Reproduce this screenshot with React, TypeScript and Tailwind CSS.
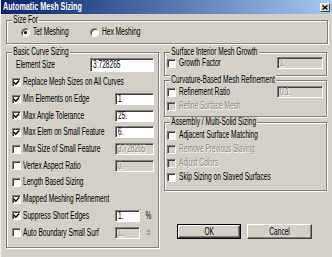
import React from "react";

// the reference is squeezed horizontally, so text is drawn narrow
function T({ children, center }: { children: React.ReactNode; center?: boolean }) {
  return (
    <span
      className={`inline-block whitespace-nowrap scale-x-[0.66] ${
        center ? "origin-center" : "origin-left"
      }`}
    >
      {children}
    </span>
  );
}

function Check({ checked, disabled }: { checked?: boolean; disabled?: boolean }) {
  return (
    <span
      className={`w-[9px] h-[9px] shrink-0 flex items-center justify-center border border-t-[#808080] border-l-[#808080] border-b-white border-r-white shadow-[inset_1px_1px_0_#404040] ${
        disabled ? "bg-[#d4d0c8]" : "bg-white"
      }`}
    >
      {checked && (
        <svg width="7" height="7" viewBox="0 0 7 7">
          <path d="M0.8 3.2 L2.8 5.2 L6.2 1.4" stroke="#000" strokeWidth="1.5" fill="none" />
        </svg>
      )}
    </span>
  );
}

function Radio({ checked }: { checked?: boolean }) {
  return (
    <span className="w-[9px] h-[9px] shrink-0 rounded-full bg-white border border-t-[#808080] border-l-[#808080] border-b-white border-r-white shadow-[inset_1px_1px_0_#404040] flex items-center justify-center">
      {checked && <span className="w-[3px] h-[3px] rounded-full bg-black" />}
    </span>
  );
}

function Field({
  value,
  disabled,
  className,
}: {
  value: string;
  disabled?: boolean;
  className: string;
}) {
  return (
    <span
      className={`flex items-center pl-[2px] border border-t-[#808080] border-l-[#808080] border-b-white border-r-white shadow-[inset_1px_1px_0_#404040] ${
        disabled ? "bg-[#d4d0c8] text-[#8a8880] [text-shadow:1px_1px_0_#fff]" : "bg-white text-black"
      } ${className}`}
    >
      <T>{value}</T>
    </span>
  );
}

function Label({ text, disabled }: { text: string; disabled?: boolean }) {
  return (
    <span
      className={`flex-1 min-w-0 ${
        disabled ? "text-[#8a8880] [text-shadow:1px_1px_0_#fff]" : "text-black"
      }`}
    >
      <T>{text}</T>
    </span>
  );
}

function Group({
  title,
  className,
  children,
}: {
  title: string;
  className: string;
  children?: React.ReactNode;
}) {
  return (
    <div
      className={`relative border border-[#808080] shadow-[inset_1px_1px_0_#fff,1px_1px_0_#fff] ${className}`}
    >
      <span className="absolute left-[5px] top-[-6px] px-[2px] bg-[#d4d0c8] leading-[10px] whitespace-nowrap origin-left scale-x-[0.66]">
        {title}
      </span>
      {children}
    </div>
  );
}

const leftRows = [
  { label: "Min Elements on Edge", checked: true, value: "1" },
  { label: "Max Angle Tolerance", checked: true, value: "25." },
  { label: "Max Elem on Small Feature", checked: true, value: "6." },
  { label: "Max Size of Small Feature", checked: false, value: "3.728265", disabled: true },
  { label: "Vertex Aspect Ratio", checked: false, value: "3.", disabled: true },
];

export default function App() {
  return (
    <div className="w-[332px] h-[257px] bg-[#d4d0c8] overflow-hidden text-[10px] leading-none text-black font-['Liberation_Sans',Arial,sans-serif] border-l border-l-[#f0eee8]">
      {/* title bar */}
      <div className="h-[14px] flex items-center justify-between pl-[2px] pr-[2px] bg-gradient-to-r from-[#0a246a] to-[#a6caf0]">
        <span className="text-white font-bold text-[10px] inline-block origin-left scale-x-[0.72] whitespace-nowrap">
          Automatic Mesh Sizing
        </span>
        <span className="w-[10px] h-[9px] bg-[#d4d0c8] border border-t-white border-l-white border-b-[#404040] border-r-[#404040] flex items-center justify-center">
          <svg width="6" height="5" viewBox="0 0 6 5">
            <path d="M0.5 0.5 L5.5 4.5 M5.5 0.5 L0.5 4.5" stroke="#000" strokeWidth="1.3" />
          </svg>
        </span>
      </div>

      <div className="px-[5px]">
        {/* Size For */}
        <Group title="Size For" className="mt-[6px] h-[24px] w-[322px]">
          <div className="flex items-center h-full pl-[14px]">
            <div className="flex items-center gap-[3px] w-[69px]">
              <Radio checked />
              <Label text="Tet Meshing" />
            </div>
            <div className="flex items-center gap-[3px] w-[80px]">
              <Radio />
              <Label text="Hex Meshing" />
            </div>
          </div>
        </Group>

        <div className="flex gap-[5px] mt-[8px]">
          {/* Basic Curve Sizing */}
          <Group title="Basic Curve Sizing" className="w-[153px] h-[196px]">
            <div className="flex flex-col pt-[3px] pr-[4px]">
              <div className="h-[18px] flex items-center pl-[9px]">
                <Label text="Element Size" />
                <Field value="3.728265" className="w-[64px] h-[14px]" />
              </div>
              <div className="h-[16.7px] flex items-center gap-[2px] pl-[5px]">
                <Check checked />
                <Label text="Replace Mesh Sizes on All Curves" />
              </div>
              {leftRows.map((r) => (
                <div key={r.label} className="h-[16.7px] flex items-center gap-[2px] pl-[5px]">
                  <Check checked={r.checked} />
                  <Label text={r.label} />
                  <Field value={r.value} disabled={r.disabled} className="w-[39px] h-[12px]" />
                </div>
              ))}
              <div className="h-[16.7px] flex items-center gap-[2px] pl-[5px]">
                <Check />
                <Label text="Length Based Sizing" />
              </div>
              <div className="h-[16.7px] flex items-center gap-[2px] pl-[5px]">
                <Check checked />
                <Label text="Mapped Meshing Refinement" />
              </div>
              <div className="h-[16.7px] flex items-center gap-[2px] pl-[5px]">
                <Check checked />
                <Label text="Suppress Short Edges" />
                <Field value="1." className="w-[25px] h-[12px]" />
                <span className="w-[12px] text-center">
                  <T center>%</T>
                </span>
              </div>
              <div className="h-[16.7px] flex items-center gap-[2px] pl-[5px]">
                <Check />
                <Label text="Auto Boundary Small Surf" />
                <Field value="1." disabled className="w-[25px] h-[12px]" />
                <span className="w-[12px] flex flex-col items-center gap-[1px]">
                  <svg width="5" height="3" viewBox="0 0 5 3">
                    <path d="M0 3 L2.5 0 L5 3 Z" fill="#a8a69e" />
                  </svg>
                  <svg width="5" height="3" viewBox="0 0 5 3">
                    <path d="M0 0 L2.5 3 L5 0 Z" fill="#a8a69e" />
                  </svg>
                </span>
              </div>
            </div>
          </Group>

          {/* right column */}
          <div className="flex flex-col w-[163px]">
            <Group title="Surface Interior Mesh Growth" className="h-[24px]">
              <div className="pt-[3px] pr-[3px]">
                <div className="h-[14px] flex items-center gap-[3px] pl-[2px]">
                  <Check />
                  <Label text="Growth  Factor" />
                  <Field value="1." disabled className="w-[46px] h-[12px]" />
                </div>
              </div>
            </Group>
            <Group title="Curvature-Based Mesh Refinement" className="mt-[4px] h-[37px]">
              <div className="pt-[4px] pr-[3px]">
                <div className="h-[14px] flex items-center gap-[3px] pl-[2px]">
                  <Check />
                  <Label text="Refinement Ratio" />
                  <Field value="0.1" disabled className="w-[46px] h-[12px]" />
                </div>
                <div className="h-[14px] flex items-center gap-[3px] pl-[2px]">
                  <Check disabled />
                  <Label text="Refine Surface Mesh" disabled />
                </div>
              </div>
            </Group>
            <Group title="Assembly / Multi-Solid Sizing" className="mt-[5px] h-[69px]">
              <div className="pt-[5px]">
                <div className="h-[14px] flex items-center gap-[3px] pl-[2px]">
                  <Check />
                  <Label text="Adjacent Surface Matching" />
                </div>
                <div className="h-[14px] flex items-center gap-[3px] pl-[2px]">
                  <Check disabled />
                  <Label text="Remove Previous Slaving" disabled />
                </div>
                <div className="h-[14px] flex items-center gap-[3px] pl-[2px]">
                  <Check disabled />
                  <Label text="Adjust Colors" disabled />
                </div>
                <div className="h-[14px] flex items-center gap-[3px] pl-[2px]">
                  <Check />
                  <Label text="Skip Sizing on Slaved Surfaces" />
                </div>
              </div>
            </Group>

            <div className="flex gap-[6px] mt-[33px] pl-[13px]">
              <button className="w-[64px] h-[15px] border border-black bg-[#d4d0c8] flex items-center justify-center p-0 text-[10px]">
                <span className="w-full h-full flex items-center justify-center border border-t-white border-l-white border-b-[#404040] border-r-[#404040] shadow-[inset_-1px_-1px_0_#808080]">
                  <T center>OK</T>
                </span>
              </button>
              <button className="w-[65px] h-[15px] bg-[#d4d0c8] flex items-center justify-center border border-t-white border-l-white border-b-[#404040] border-r-[#404040] shadow-[inset_-1px_-1px_0_#808080] p-0 text-[10px]">
                <T center>Cancel</T>
              </button>
            </div>
          </div>
        </div>
      </div>
    </div>
  );
}
